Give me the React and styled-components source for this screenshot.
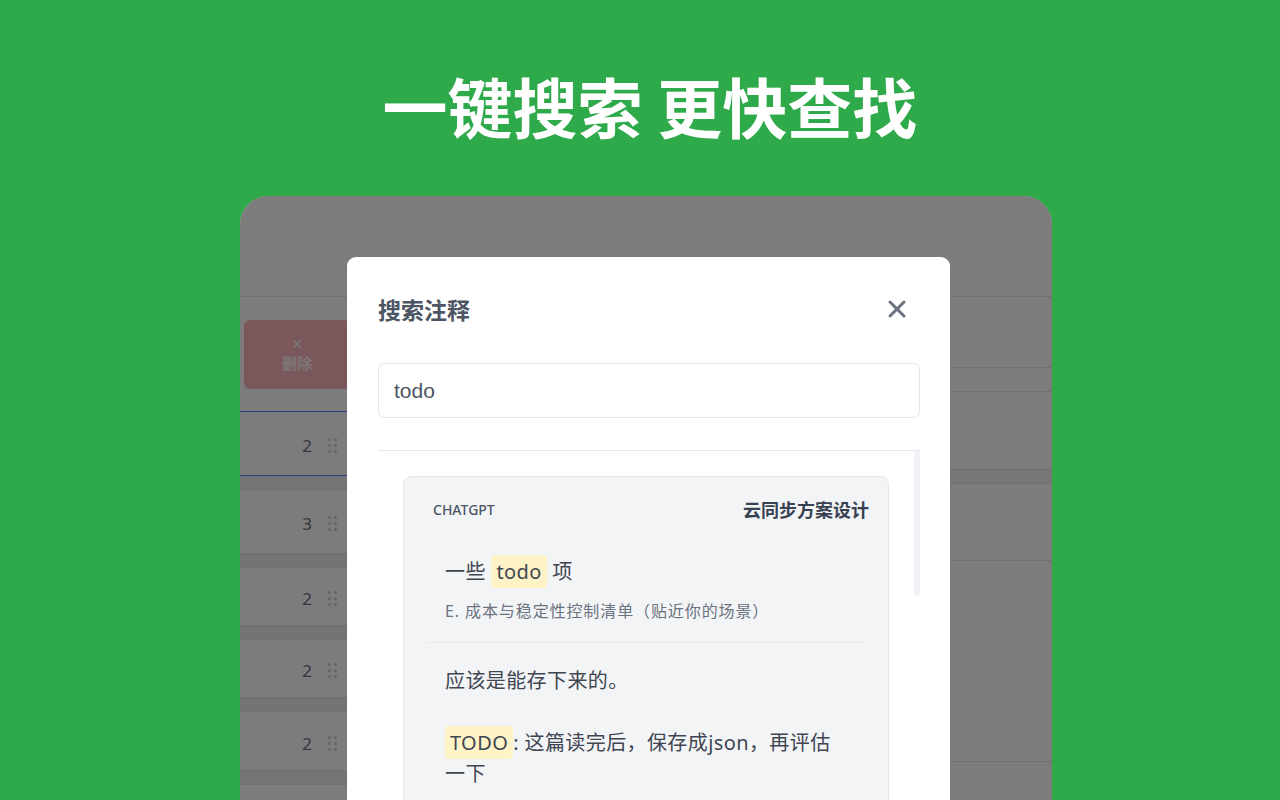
import styled, { createGlobalStyle } from 'styled-components';
import { X } from 'lucide-react';

const GlobalStyle = createGlobalStyle`
  html, body {
    margin: 0;
    padding: 0;
    height: 100%;
    overflow: hidden;
    background: #2eaa4a;
  }
  body {
    font-family: "Noto Sans", "Noto Sans CJK SC", sans-serif;
  }
`;

const Stage = styled.div`
  width: 1280px;
  height: 800px;
  display: flex;
  flex-direction: column;
  align-items: center;
  overflow: hidden;
  background: #2eaa4a;
`;

const Headline = styled.h1`
  margin: 70px 0 0 20px;
  font: 700 65px/70px "Noto Sans CJK SC", sans-serif;
  color: #fff;
`;

const Frame = styled.div`
  margin: 56px 0 0 12px;
  width: 812px;
  height: 620px;
  flex-shrink: 0;
  border-radius: 28px 28px 0 0;
  overflow: hidden;
  position: relative;
  background: #fff;
  display: flex;
`;

/* ---- page behind the dialog ---- */

const LeftPane = styled.div`
  width: 330px;
  display: flex;
  flex-direction: column;
  & > * {
    flex-shrink: 0;
  }
`;

const RightPane = styled.div`
  flex: 1;
  display: flex;
  flex-direction: column;
  & > * {
    flex-shrink: 0;
  }
`;

const PaneHeader = styled.div`
  height: 100px;
  border-bottom: 1px solid #e5e7eb;
`;

const Toolbar = styled.div`
  padding: 23px 0 22px 4px;
`;

const DeleteButton = styled.div`
  width: 106px;
  height: 69px;
  border-radius: 6px;
  background: #fbb4bc;
  color: rgba(255, 255, 255, 0.85);
  display: flex;
  flex-direction: column;
  align-items: center;
  justify-content: center;
  gap: 2px;
  font: 700 15px/20px "Noto Sans CJK SC", sans-serif;
`;

const RowList = styled.div`
  display: flex;
  flex-direction: column;
  gap: 13px;
  background: #eceef1;
  & > * {
    flex-shrink: 0;
  }
`;

const Row = styled.div`
  height: ${({ h }) => h}px;
  box-sizing: border-box;
  padding-top: 4px;
  background: #fff;
  border-top: 1px solid ${({ active }) => (active ? '#5b7cfa' : '#e5e7eb')};
  border-bottom: 1px solid ${({ active }) => (active ? '#5b7cfa' : '#e5e7eb')};
  display: flex;
  align-items: center;
  font: 400 17px "Noto Sans", sans-serif;
  color: #6b7280;
`;

const RowNum = styled.span`
  width: 72px;
  text-align: right;
`;

const Grip = styled.span`
  margin-left: 16px;
  display: grid;
  grid-template-columns: 3px 3px;
  gap: 3px;
  span {
    width: 3px;
    height: 3px;
    border-radius: 50%;
    background: #c9ced6;
  }
`;

const Bar = styled.div`
  height: ${({ h }) => h}px;
  border-bottom: 1px solid #e5e7eb;
  background: ${({ shade }) => (shade ? '#f4f5f7' : '#fff')};
`;

const Dim = styled.div`
  position: absolute;
  inset: 0;
  background: rgba(0, 0, 0, 0.515);
`;

/* ---- dialog ---- */

const Modal = styled.div`
  position: absolute;
  left: 107px;
  top: 61px;
  width: 603px;
  bottom: -20px;
  background: #fff;
  border-radius: 9px;
  padding: 38px 30px 0 31px;
  box-sizing: border-box;
  display: flex;
  flex-direction: column;
  & > * {
    flex-shrink: 0;
  }
`;

const ModalHead = styled.div`
  display: flex;
  align-items: center;
  justify-content: space-between;
  height: 28px;
`;

const ModalTitle = styled.h2`
  margin: 0;
  font: 700 23px/28px "Noto Sans CJK SC", sans-serif;
  color: #4b5563;
`;

const CloseBtn = styled.button`
  border: 0;
  background: none;
  padding: 0;
  margin-right: 9px;
  color: #6b7280;
  display: flex;
`;

const SearchInput = styled.div`
  margin-top: 40px;
  height: 55px;
  border: 1px solid #e5e7eb;
  border-radius: 6px;
  box-sizing: border-box;
  padding-left: 15px;
  display: flex;
  align-items: center;
  font: 400 21px "Liberation Sans", Arial, sans-serif;
  color: #4b5563;
`;

const Results = styled.div`
  margin-top: 32px;
  border-top: 1px solid #e5e7eb;
  display: flex;
  align-items: flex-start;
  flex: 1;
`;

const ResultsBody = styled.div`
  flex: 1;
  padding: 25px 25px 0;
`;

const ScrollTrack = styled.div`
  width: 6px;
  height: 145px;
  border-radius: 0 0 3px 3px;
  background: #f1f2f5;
`;

const Card = styled.div`
  background: #f3f4f6;
  border: 1px solid #e5e7eb;
  border-radius: 8px;
  padding-top: 21px;
  height: 400px;
`;

const CardHead = styled.div`
  display: flex;
  justify-content: space-between;
  align-items: center;
  padding: 0 19px 0 29px;
  height: 22px;
`;

const Source = styled.span`
  font: 500 14px "Noto Sans", sans-serif;
  color: #4b5563;
`;

const DocTitle = styled.span`
  font: 700 18px "Noto Sans CJK SC", sans-serif;
  color: #374151;
`;

const Items = styled.div`
  margin: 23px 24px 0;
`;

const Item = styled.div`
  padding: ${({ first }) => (first ? '13px 17px 20px' : '22px 17px 0')};
  border-bottom: ${({ first }) => (first ? '1px solid #e5e7eb' : '0')};
`;

const Text = styled.p`
  margin: 0;
  max-width: 392px;
  font: 400 20px/31px "Noto Sans", "Noto Sans CJK SC", sans-serif;
  letter-spacing: 0.4px;
  color: #3f4652;
  white-space: pre-wrap;
`;

const Sub = styled.p`
  margin: 13px 0 0;
  font: 400 16px/22px "Noto Sans", "Noto Sans CJK SC", sans-serif;
  letter-spacing: 0.9px;
  color: #6b7280;
`;

const Mark = styled.mark`
  background: #fef3c7;
  color: inherit;
  padding: 3px 5px;
  border-radius: 4px;
`;

const rows = [
  { n: 2, h: 65, active: true },
  { n: 3, h: 65 },
  { n: 2, h: 59 },
  { n: 2, h: 59 },
  { n: 2, h: 60 },
  { n: '', h: 58 },
];

export default function App() {
  return (
    <Stage>
      <GlobalStyle />
      <Headline>一键搜索 更快查找</Headline>
      <Frame>
        <LeftPane>
          <PaneHeader />
          <Toolbar>
            <DeleteButton>
              <X size={14} strokeWidth={2.5} />
              删除
            </DeleteButton>
          </Toolbar>
          <RowList>
            {rows.map((r, i) => (
              <Row key={i} h={r.h} active={r.active}>
                <RowNum>{r.n}</RowNum>
                {r.n !== '' && (
                  <Grip>
                    {[0, 1, 2, 3, 4, 5].map((d) => (
                      <span key={d} />
                    ))}
                  </Grip>
                )}
              </Row>
            ))}
          </RowList>
        </LeftPane>
        <RightPane>
          <PaneHeader />
          <Bar h={70} />
          <Bar h={23} />
          <Bar h={77} />
          <Bar h={13} shade />
          <Bar h={76} />
          <Bar h={200} />
        </RightPane>
        <Dim />
        <Modal>
          <ModalHead>
            <ModalTitle>搜索注释</ModalTitle>
            <CloseBtn>
              <X size={28} strokeWidth={2.6} />
            </CloseBtn>
          </ModalHead>
          <SearchInput>todo</SearchInput>
          <Results>
            <ResultsBody>
              <Card>
                <CardHead>
                  <Source>CHATGPT</Source>
                  <DocTitle>云同步方案设计</DocTitle>
                </CardHead>
                <Items>
                  <Item first>
                    <Text>
                      一些 <Mark>todo</Mark> 项
                    </Text>
                    <Sub>E. 成本与稳定性控制清单（贴近你的场景）</Sub>
                  </Item>
                  <Item>
                    <Text>
                      应该是能存下来的。{'\n\n'}
                      <Mark>TODO</Mark>: 这篇读完后，保存成json，再评估一下
                    </Text>
                  </Item>
                </Items>
              </Card>
            </ResultsBody>
            <ScrollTrack />
          </Results>
        </Modal>
      </Frame>
    </Stage>
  );
}
